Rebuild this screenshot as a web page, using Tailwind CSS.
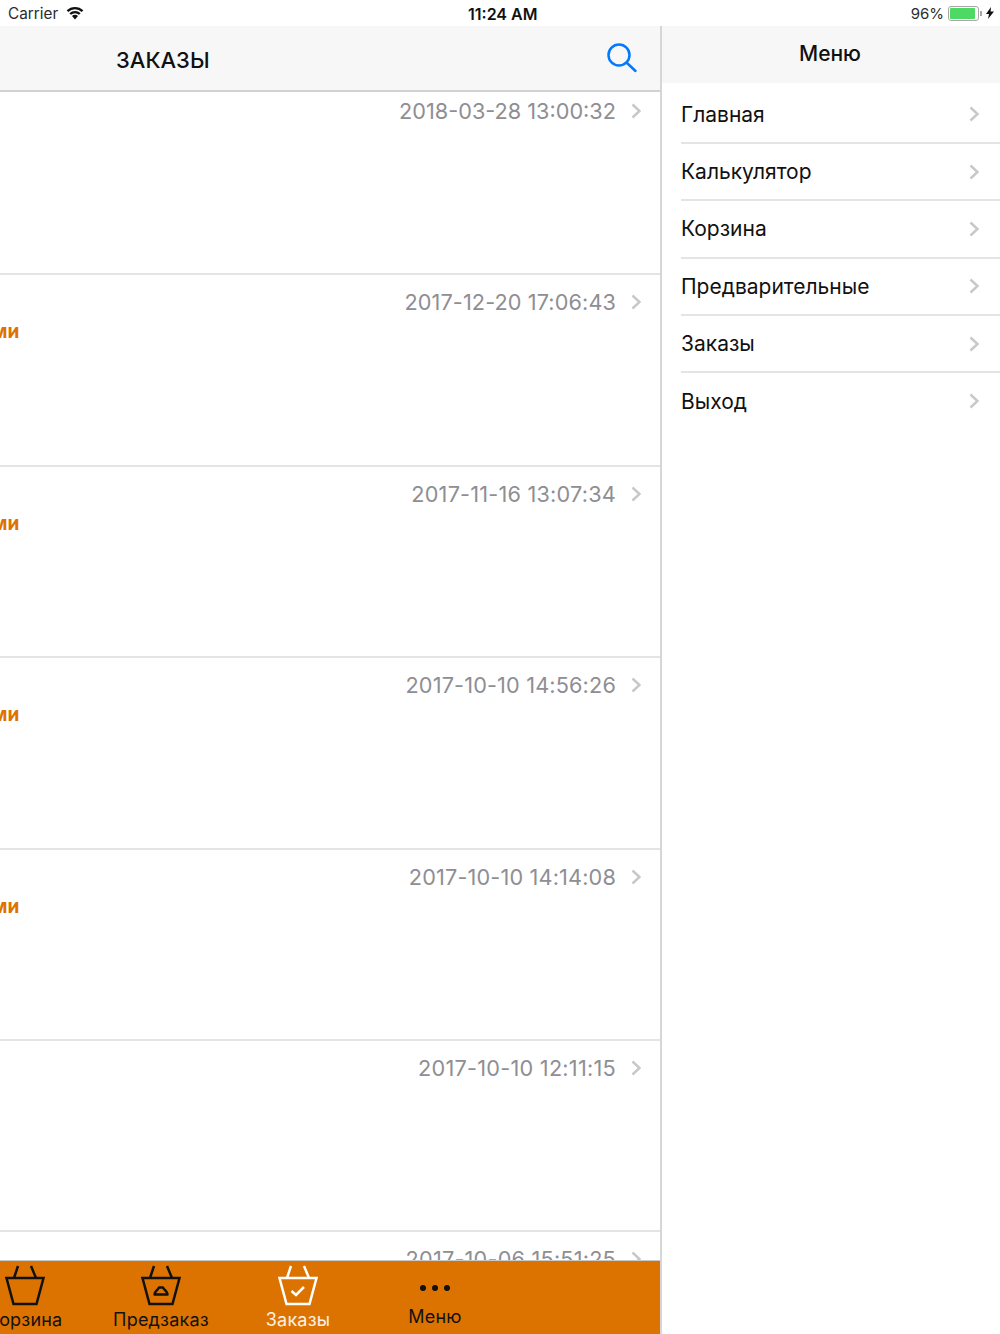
<!DOCTYPE html>
<html lang="ru">
<head>
<meta charset="utf-8">
<title>Заказы</title>
<script src="https://cdn.jsdelivr.net/npm/@tailwindcss/browser@4"></script>
</head>
<body class="bg-white">
<div class="w-[1000px] h-[1334px] flex flex-col overflow-hidden bg-white text-black font-['Inter','Liberation_Sans',sans-serif]">
  <!-- status bar -->
  <div class="h-[26px] shrink-0 relative flex items-center justify-between pl-2 pr-[6px] text-[15px] leading-none text-[#2b2b2b]">
    <div class="flex items-center gap-2">
      <span class="text-[15.300px] mt-[2px]">Carrier</span>
      <svg class="w-[18px] h-[14px]" viewBox="0 0 18 14"><path d="M1.500 5.200a10.800 10.800 0 0 1 15 0M4.200 8a7 7 0 0 1 9.600 0" fill="none" stroke="#111" stroke-width="2.400"/><path d="M6 10.100a4.200 4.200 0 0 1 6 0L9 13.400z" fill="#111"/></svg>
    </div>
    <span class="absolute left-[468px] top-[6px] text-[16px] font-semibold text-[#111]">11:24 AM</span>
    <div class="flex items-center gap-[4px]">
      <span class="ml-px">96%</span>
      <div class="flex items-center gap-px">
        <div class="w-[31px] h-[15px] border border-[#a8a8a8] rounded-[3px] p-px"><div class="w-[93%] h-full bg-[#4cd964] rounded-[1px]"></div></div>
        <div class="w-[2px] h-[5px] bg-[#a8a8a8]"></div>
      </div>
      <svg class="w-[8px] h-[12px]" viewBox="0 0 8 12"><path d="M5 0 0 7h3l-1 5 6-7.500H4.600z" fill="#111"/></svg>
    </div>
  </div>

  <div class="flex-1 flex min-h-0">
    <!-- left master column -->
    <div class="w-[662px] shrink-0 flex flex-col border-r-2 border-[#d6d6d6]">
      <div class="h-[66px] shrink-0 relative flex items-center justify-start pl-[116px] bg-[#f7f7f7] border-b-2 border-[#d2d2d2]">
        <span class="text-[22px] font-medium leading-none mt-[4px] text-[#111]">ЗАКАЗЫ</span>
        <svg class="absolute left-[606px] top-[16px] w-[32px] h-[32px]" viewBox="0 0 32 32"><circle cx="13" cy="13" r="10.500" fill="none" stroke="#007aff" stroke-width="2.500"/><path d="M21 21l8.500 8" fill="none" stroke="#007aff" stroke-width="2.500" stroke-linecap="round"/></svg>
      </div>
      <div class="flex-1 min-h-0 overflow-hidden">
        <div class="mt-[-8px]">
          <div class="h-[191.400px] border-b-2 border-[#e4e4e6] flex flex-col pt-[13px] pr-[19px]">
            <div class="flex items-center justify-end gap-[15px] text-[21.700px] leading-[28px] text-[#8e8e93]"><span>2018-03-28 13:00:32</span><svg class="w-[10px] h-[16px]" viewBox="0 0 10 16"><path d="M1.500 1.500 8.500 8l-7 6.500" fill="none" stroke="#c7c7cc" stroke-width="2.400"/></svg></div>
          </div>
          <div class="h-[191.400px] border-b-2 border-[#e4e4e6] flex flex-col pt-[13px] pr-[19px]">
            <div class="flex items-center justify-end gap-[15px] text-[21.700px] leading-[28px] text-[#8e8e93]"><span class="tracking-[0.1px]">2017-12-20 17:06:43</span><svg class="w-[10px] h-[16px]" viewBox="0 0 10 16"><path d="M1.500 1.500 8.500 8l-7 6.500" fill="none" stroke="#c7c7cc" stroke-width="2.400"/></svg></div>
            <span class="ml-[-8px] mt-[3px] text-[19px] leading-[26px] font-bold text-[#dc7300]">ми</span>
          </div>
          <div class="h-[191.400px] border-b-2 border-[#e4e4e6] flex flex-col pt-[13px] pr-[19px]">
            <div class="flex items-center justify-end gap-[15px] text-[21.700px] leading-[28px] text-[#8e8e93]"><span class="tracking-[0.2px]">2017-11-16 13:07:34</span><svg class="w-[10px] h-[16px]" viewBox="0 0 10 16"><path d="M1.500 1.500 8.500 8l-7 6.500" fill="none" stroke="#c7c7cc" stroke-width="2.400"/></svg></div>
            <span class="ml-[-8px] mt-[3px] text-[19px] leading-[26px] font-bold text-[#dc7300]">ми</span>
          </div>
          <div class="h-[191.400px] border-b-2 border-[#e4e4e6] flex flex-col pt-[13px] pr-[19px]">
            <div class="flex items-center justify-end gap-[15px] text-[21.700px] leading-[28px] text-[#8e8e93]"><span class="tracking-[0.15px]">2017-10-10 14:56:26</span><svg class="w-[10px] h-[16px]" viewBox="0 0 10 16"><path d="M1.500 1.500 8.500 8l-7 6.500" fill="none" stroke="#c7c7cc" stroke-width="2.400"/></svg></div>
            <span class="ml-[-8px] mt-[3px] text-[19px] leading-[26px] font-bold text-[#dc7300]">ми</span>
          </div>
          <div class="h-[191.400px] border-b-2 border-[#e4e4e6] flex flex-col pt-[13px] pr-[19px]">
            <div class="flex items-center justify-end gap-[15px] text-[21.700px] leading-[28px] text-[#8e8e93]"><span class="tracking-[0.15px]">2017-10-10 14:14:08</span><svg class="w-[10px] h-[16px]" viewBox="0 0 10 16"><path d="M1.500 1.500 8.500 8l-7 6.500" fill="none" stroke="#c7c7cc" stroke-width="2.400"/></svg></div>
            <span class="ml-[-8px] mt-[3px] text-[19px] leading-[26px] font-bold text-[#dc7300]">ми</span>
          </div>
          <div class="h-[191.400px] border-b-2 border-[#e4e4e6] flex flex-col pt-[13px] pr-[19px]">
            <div class="flex items-center justify-end gap-[15px] text-[21.700px] leading-[28px] text-[#8e8e93]"><span class="tracking-[0.25px]">2017-10-10 12:11:15</span><svg class="w-[10px] h-[16px]" viewBox="0 0 10 16"><path d="M1.500 1.500 8.500 8l-7 6.500" fill="none" stroke="#c7c7cc" stroke-width="2.400"/></svg></div>
          </div>
          <div class="h-[191.400px] flex flex-col pt-[13px] pr-[19px]">
            <div class="flex items-center justify-end gap-[15px] text-[21.700px] leading-[28px] text-[#8e8e93]"><span class="tracking-[0.2px]">2017-10-06 15:51:25</span><svg class="w-[10px] h-[16px]" viewBox="0 0 10 16"><path d="M1.500 1.500 8.500 8l-7 6.500" fill="none" stroke="#c7c7cc" stroke-width="2.400"/></svg></div>
          </div>
        </div>
      </div>
      <!-- tab bar -->
      <div class="h-[74px] shrink-0 bg-[#dc7300] border-t border-[#c9c9c9] relative overflow-hidden text-[18px] tracking-[0.2px] leading-none text-[#111]">
        <div class="absolute left-[-43px] top-0 w-[136px] flex flex-col items-center">
          <svg class="w-[44px] h-[44px] mt-[2px]" viewBox="0 0 44 44"><path d="M15 3l-4 12M28 3l5 12M3.500 15h37l-7 26h-23z" fill="none" stroke="#111" stroke-width="2.500"/></svg>
          <span class="mt-[4px]">Корзина</span>
        </div>
        <div class="absolute left-[93px] top-0 w-[136px] flex flex-col items-center">
          <svg class="w-[44px] h-[44px] mt-[2px]" viewBox="0 0 44 44"><path d="M15 3l-4 12M28 3l5 12M3.500 15h37l-7 26h-23z" fill="none" stroke="#111" stroke-width="2.500"/><path d="M15.500 31.500c0-3 3-4 4.500-7h4c1.500 3 4.500 4 4.500 7z" fill="none" stroke="#111" stroke-width="2.500" stroke-linejoin="round"/></svg>
          <span class="mt-[4px]">Предзаказ</span>
        </div>
        <div class="absolute left-[230px] top-0 w-[136px] flex flex-col items-center text-white/90">
          <svg class="w-[44px] h-[44px] mt-[2px]" viewBox="0 0 44 44"><path d="M15 3l-4 12M28 3l5 12M3.500 15h37l-7 26h-23z" fill="none" stroke="#fff" stroke-width="2.500"/><path d="M15.500 28l4.500 4 8-8" fill="none" stroke="#fff" stroke-width="2.500"/></svg>
          <span class="mt-[4px]">Заказы</span>
        </div>
        <div class="absolute left-[367px] top-0 w-[136px] flex flex-col items-center">
          <div class="flex gap-[6px] mt-[24px]"><span class="w-[6px] h-[6px] rounded-full bg-[#111]"></span><span class="w-[6px] h-[6px] rounded-full bg-[#111]"></span><span class="w-[6px] h-[6px] rounded-full bg-[#111]"></span></div>
          <span class="mt-[17px]">Меню</span>
        </div>
      </div>
    </div>

    <!-- right menu column -->
    <div class="flex-1 min-w-0 flex flex-col">
      <div class="h-[57px] shrink-0 bg-[#f7f7f7] flex items-center justify-center pb-[2px]">
        <span class="text-[21px] font-medium leading-none text-[#111] ml-[-2px]">Меню</span>
      </div>
      <div class="pl-[19px] text-[21px] leading-none text-[#111]">
        <div class="h-[61px] pt-[3px] flex items-center justify-between pr-[21px] border-b-2 border-[#e4e4e6]"><span>Главная</span><svg class="w-[10px] h-[16px]" viewBox="0 0 10 16"><path d="M1.500 1.500 8.500 8l-7 6.500" fill="none" stroke="#c7c7cc" stroke-width="2.400"/></svg></div>
        <div class="h-[57.300px] flex items-center justify-between pr-[21px] border-b-2 border-[#e4e4e6]"><span>Калькулятор</span><svg class="w-[10px] h-[16px]" viewBox="0 0 10 16"><path d="M1.500 1.500 8.500 8l-7 6.500" fill="none" stroke="#c7c7cc" stroke-width="2.400"/></svg></div>
        <div class="h-[57.300px] flex items-center justify-between pr-[21px] border-b-2 border-[#e4e4e6]"><span>Корзина</span><svg class="w-[10px] h-[16px]" viewBox="0 0 10 16"><path d="M1.500 1.500 8.500 8l-7 6.500" fill="none" stroke="#c7c7cc" stroke-width="2.400"/></svg></div>
        <div class="h-[57.300px] flex items-center justify-between pr-[21px] border-b-2 border-[#e4e4e6]"><span>Предварительные</span><svg class="w-[10px] h-[16px]" viewBox="0 0 10 16"><path d="M1.500 1.500 8.500 8l-7 6.500" fill="none" stroke="#c7c7cc" stroke-width="2.400"/></svg></div>
        <div class="h-[57.300px] flex items-center justify-between pr-[21px] border-b-2 border-[#e4e4e6]"><span>Заказы</span><svg class="w-[10px] h-[16px]" viewBox="0 0 10 16"><path d="M1.500 1.500 8.500 8l-7 6.500" fill="none" stroke="#c7c7cc" stroke-width="2.400"/></svg></div>
        <div class="h-[56px] flex items-center justify-between pr-[21px]"><span>Выход</span><svg class="w-[10px] h-[16px]" viewBox="0 0 10 16"><path d="M1.500 1.500 8.500 8l-7 6.500" fill="none" stroke="#c7c7cc" stroke-width="2.400"/></svg></div>
      </div>
    </div>
  </div>
</div>
</body>
</html>
